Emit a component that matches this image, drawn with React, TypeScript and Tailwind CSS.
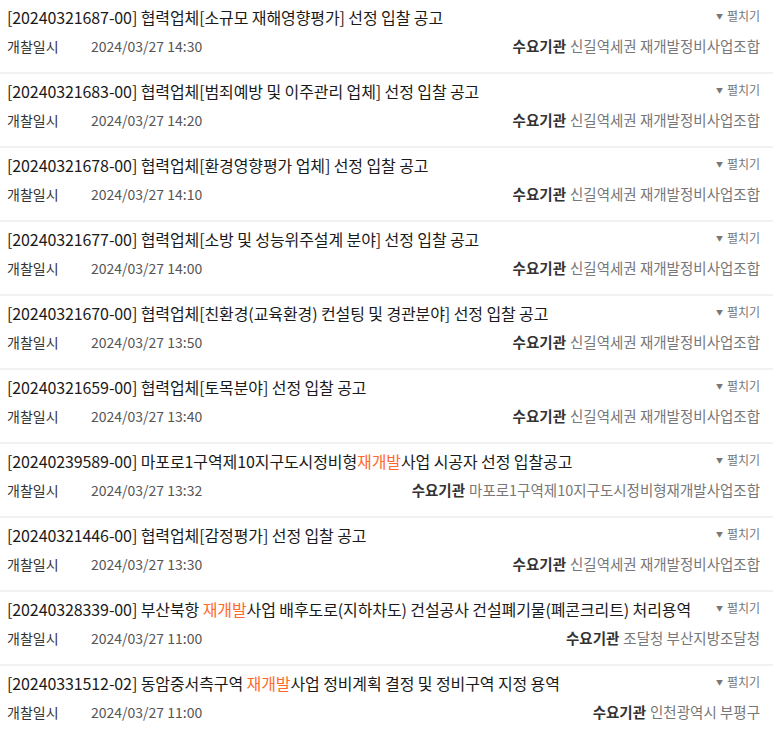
import React from 'react';

interface Bid {
  id: string;
  title: React.ReactNode;
  date: string;
  org: string;
}

const Hl: React.FC<{ children: React.ReactNode }> = ({ children }) => (
  <span className="text-[#ff6a2a]">{children}</span>
);

const bids: Bid[] = [
  { id: '20240321687-00', title: '협력업체[소규모 재해영향평가] 선정 입찰 공고', date: '2024/03/27 14:30', org: '신길역세권 재개발정비사업조합' },
  { id: '20240321683-00', title: '협력업체[범죄예방 및 이주관리 업체] 선정 입찰 공고', date: '2024/03/27 14:20', org: '신길역세권 재개발정비사업조합' },
  { id: '20240321678-00', title: '협력업체[환경영향평가 업체] 선정 입찰 공고', date: '2024/03/27 14:10', org: '신길역세권 재개발정비사업조합' },
  { id: '20240321677-00', title: '협력업체[소방 및 성능위주설계 분야] 선정 입찰 공고', date: '2024/03/27 14:00', org: '신길역세권 재개발정비사업조합' },
  { id: '20240321670-00', title: '협력업체[친환경(교육환경) 컨설팅 및 경관분야] 선정 입찰 공고', date: '2024/03/27 13:50', org: '신길역세권 재개발정비사업조합' },
  { id: '20240321659-00', title: '협력업체[토목분야] 선정 입찰 공고', date: '2024/03/27 13:40', org: '신길역세권 재개발정비사업조합' },
  {
    id: '20240239589-00',
    title: (<>마포로1구역제10지구도시정비형<Hl>재개발</Hl>사업 시공자 선정 입찰공고</>),
    date: '2024/03/27 13:32',
    org: '마포로1구역제10지구도시정비형재개발사업조합',
  },
  { id: '20240321446-00', title: '협력업체[감정평가] 선정 입찰 공고', date: '2024/03/27 13:30', org: '신길역세권 재개발정비사업조합' },
  {
    id: '20240328339-00',
    title: (<>부산북항 <Hl>재개발</Hl>사업 배후도로(지하차도) 건설공사 건설폐기물(폐콘크리트) 처리용역</>),
    date: '2024/03/27 11:00',
    org: '조달청 부산지방조달청',
  },
  {
    id: '20240331512-02',
    title: (<>동암중서측구역 <Hl>재개발</Hl>사업 정비계획 결정 및 정비구역 지정 용역</>),
    date: '2024/03/27 11:00',
    org: '인천광역시 부평구',
  },
];

const BidRow: React.FC<{ bid: Bid }> = ({ bid }) => (
  <li className="h-[74px] border-b-2 border-[#f2f2f2] pl-[7px] pr-[13px] pt-[5px]">
    <div className="flex items-start justify-between">
      <p className="text-[16px] leading-[24px] text-[#1a1a1a] tracking-[-0.1px] whitespace-nowrap">
        [{bid.id}] {bid.title}
      </p>
      <button className="flex items-center gap-[4px] text-[12px] leading-[22px] text-[#777] shrink-0">
        <span className="text-[7px]">▼</span>
        펼치기
      </button>
    </div>
    <div className="mt-[5px] flex items-center justify-between leading-[24px]">
      <div className="flex text-[14px]">
        <span className="w-[84px] text-[#333]">개찰일시</span>
        <span className="text-[#555]">{bid.date}</span>
      </div>
      <div className="text-[14.5px]">
        <span className="font-bold text-[#333] mr-[4px]">수요기관</span>
        <span className="text-[#777]">{bid.org}</span>
      </div>
    </div>
  </li>
);

export default function App() {
  return (
    <div className="w-[773px] bg-white" style={{ fontFamily: '"Noto Sans CJK KR", "Noto Sans", sans-serif' }}>
      <ul>
        {bids.map(b => <BidRow key={b.id} bid={b} />)}
      </ul>
    </div>
  );
}
